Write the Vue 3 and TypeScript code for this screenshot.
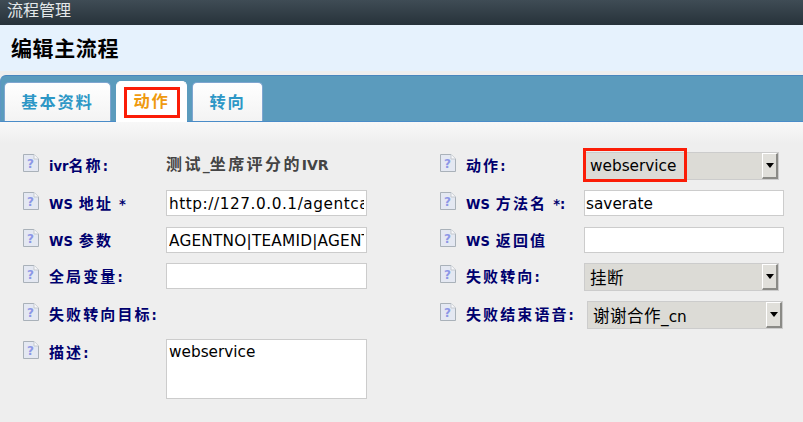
<script setup lang="ts">
interface Row {
  label: string
  kind: 'text' | 'input' | 'select' | 'area' | 'none'
  value?: string
  right?: boolean
  tight?: boolean
  shift?: boolean
  mark?: boolean
  cls?: string
}
const rows: Row[] = [
  { label: 'ivr名称:', kind: 'text', value: '测试_坐席评分的IVR' },
  { label: '动作:', kind: 'select', value: 'webservice', mark: true, right: true },
  { label: 'WS 地址 *', kind: 'input', value: 'http://127.0.0.1/agentcall/saverate', cls: 'wide' },
  { label: 'WS 方法名 *:', kind: 'input', value: 'saverate', right: true, tight: true },
  { label: 'WS 参数', kind: 'input', value: 'AGENTNO|TEAMID|AGENTNAME', cls: 'mid' },
  { label: 'WS 返回值', kind: 'input', value: '', right: true },
  { label: '全局变量:', kind: 'input', value: '' },
  { label: '失败转向:', kind: 'select', value: '挂断', right: true },
  { label: '失败转向目标:', kind: 'none' },
  { label: '失败结束语音:', kind: 'select', value: '谢谢合作_cn', shift: true, right: true },
  { label: '描述:', kind: 'area', value: 'webservice' },
]
const tabs = ['基本资料', '动作', '转向']

// CJK glyphs are set larger than the Latin ones, so text is split into runs.
function runs(s: string): { t: string; cjk: boolean }[] {
  return (s.match(/[\u3400-\u9fff]+|[^\u3400-\u9fff]+/g) ?? []).map((t) => ({
    t,
    cjk: /[\u3400-\u9fff]/.test(t),
  }))
}
</script>

<template>
  <div class="page">
    <div class="topbar">流程管理</div>
    <h1 class="title">编辑主流程</h1>
    <div class="tabbar">
      <div v-for="(t, i) in tabs" :key="t" class="tab" :class="{ active: i === 1 }">
        <span>{{ t }}</span>
        <i v-if="i === 1" class="mark tabmark"></i>
      </div>
    </div>
    <div class="form">
      <template v-for="r in rows" :key="r.label">
        <div class="label">
          <svg class="help" width="16" height="18" viewBox="0 0 16 18">
            <path d="M.5.5H11L15.5 5V17.5H.5Z" fill="#e4e8f2" stroke="#a9b1b9" />
            <path d="M11 .5V5H15.5" fill="#f8f8fa" stroke="#c4c9cf" />
            <text x="7.5" y="14" class="q">?</text>
          </svg>
          <span><span v-for="(p, j) in runs(r.label)" :key="j" :class="{ cjk: p.cjk }">{{ p.t }}</span></span>
        </div>
        <div class="cell">
          <div v-if="r.kind === 'text'" class="static">
            <span v-for="(p, j) in runs(r.value ?? '')" :key="j" :class="{ cjk: p.cjk }">{{ p.t }}</span>
          </div>
          <input
            v-else-if="r.kind === 'input'"
            class="input"
            :class="[r.cls, { right: r.right, tight: r.tight }]"
            :value="r.value"
            readonly
          />
          <textarea v-else-if="r.kind === 'area'" class="area" :value="r.value" readonly></textarea>
          <div v-else-if="r.kind === 'select'" class="select" :class="{ shift: r.shift }">
            <span class="sval"><span v-for="(p, j) in runs(r.value ?? '')" :key="j" :class="{ cjk: p.cjk }">{{ p.t }}</span></span>
            <span class="sbtn"><b></b></span>
            <i v-if="r.mark" class="mark selmark"></i>
          </div>
        </div>
      </template>
    </div>
  </div>
</template>

<style>
html, body { margin: 0; background: #eee; }
</style>

<style scoped>
.page {
  width: 803px;
  height: 422px;
  overflow: hidden;
  font-family: "DejaVu Sans", "Noto Sans CJK SC", sans-serif;
  background: #eee;
}
.topbar {
  height: 25px;
  box-sizing: border-box;
  padding-left: 7px;
  line-height: 22px;
  font-size: 16px;
  color: #e4e8ea;
  background: linear-gradient(#3f4c55, #27323a);
}
.title {
  margin: 0;
  height: 46px;
  box-sizing: border-box;
  padding-left: 11px;
  line-height: 49px;
  font-size: 21px;
  font-weight: 700;
  letter-spacing: .6px;
  color: #000;
  background: #e6f2fd;
}
.tabbar {
  margin-top: 4px;
  height: 47px;
  box-sizing: border-box;
  padding: 5px 0 0 3px;
  display: flex;
  align-items: flex-end;
  gap: 5px;
  background: #5b9bbd;
  border-top: 1px solid #4a86bd;
  border-bottom: 1px solid #4a8cc8;
  border-left: 1px solid #5d95c4;
  border-radius: 6px 0 0 0;
}
.tab {
  position: relative;
  width: 71px;
  height: 39px;
  box-sizing: border-box;
  text-align: center;
  line-height: 40px;
  font-size: 16.3px;
  font-weight: 700;
  letter-spacing: 1.8px;
  color: #2d97c6;
  background: linear-gradient(#fff, #f3f3f3);
  border-radius: 5px 5px 0 0;
  border: 1px solid #7fa6d0;
  border-bottom: 0;
}
.tab:first-child { width: 107px; }
.tab.active {
  height: 41px;
  margin-bottom: -1px;
  color: #ef9a0f;
  background: #fff;
  border-color: #fff;
}
.mark {
  position: absolute;
  display: block;
  box-sizing: border-box;
  border: 3px solid #fb1d07;
  pointer-events: none;
}
.tabmark { left: 7px; top: 5px; width: 56px; height: 31px; }
.form {
  height: 300px;
  box-sizing: border-box;
  padding: 30px 0 0 23px;
  background: linear-gradient(#f8f8f8, #eee 22px);
  display: grid;
  grid-template-columns: 143px 274px 144px 200px;
  grid-template-rows: 38px 37px 36px 38px 38px 60px;
}
.label {
  display: flex;
  align-items: flex-start;
  gap: 10px;
  padding-top: 2px;
  line-height: 25px;
  font-size: 14.5px;
  font-stretch: condensed;
  font-weight: 700;
  word-spacing: 1.5px;
  color: #00006e;
  white-space: nowrap;
}
.label .cjk {
  font-size: 15px;
  letter-spacing: 2.1px;
}
.help { flex: none; }
.help .q {
  font: 700 12px "DejaVu Sans", sans-serif;
  fill: #8d97e6;
  text-anchor: middle;
}
.cell { min-width: 0; }
.static {
  line-height: 25px;
  font-size: 14px;
  font-weight: 700;
  color: #444;
}
.static .cjk {
  font-size: 16px;
  letter-spacing: 2.4px;
}
.input, .area {
  display: block;
  box-sizing: border-box;
  width: 201px;
  height: 26px;
  margin: 0;
  padding: 2px 2px 0;
  border: 1px solid #ccc;
  border-radius: 0;
  outline: 0;
  background: #fff;
  color: #000;
  font: 15.3px "DejaVu Sans", "Noto Sans CJK SC", sans-serif;
}
.input.right { width: 200px; }
.input.tight { padding-left: 1px; }
.input.wide { letter-spacing: .55px; }
.input.mid { letter-spacing: .22px; }
.area {
  height: 60px;
  resize: none;
  overflow: hidden;
  line-height: 20px;
}
.select {
  position: relative;
  display: flex;
  width: 195px;
  height: 28px;
  box-sizing: border-box;
  align-items: center;
  background: #dcdbd6;
  border: 1px solid #ccc;
  font-size: 15.3px;
  color: #000;
}
.select .cjk { font-size: 16.5px; letter-spacing: .5px; }
.select.shift { width: 196px; margin-left: 3px; }
.sval { flex: 1; padding-left: 5px; }
.sbtn {
  width: 16px;
  height: 26px;
  box-sizing: border-box;
  display: flex;
  align-items: center;
  justify-content: center;
  background: #e0dfda;
  border-style: solid;
  border-width: 1px 2px 2px 1px;
  border-color: #fff #8a8a86 #8a8a86 #fff;
}
.sbtn b {
  width: 0;
  height: 0;
  border-style: solid;
  border-width: 5px 4px 0;
  border-color: #000 transparent transparent;
}
.selmark { left: -2px; top: -5px; width: 104px; height: 34px; }
</style>
